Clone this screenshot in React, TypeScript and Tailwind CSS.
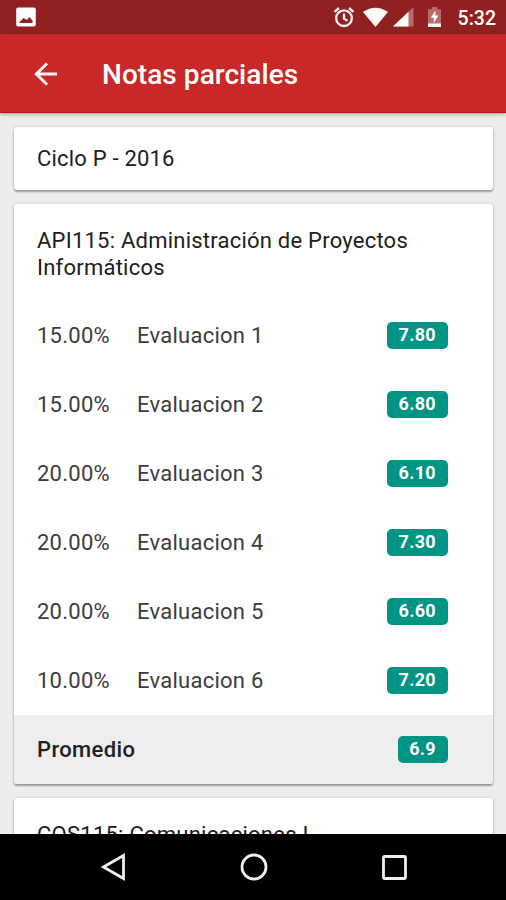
import React from 'react';

const evaluations = [
  { weight: '15.00%', name: 'Evaluacion 1', grade: '7.80' },
  { weight: '15.00%', name: 'Evaluacion 2', grade: '6.80' },
  { weight: '20.00%', name: 'Evaluacion 3', grade: '6.10' },
  { weight: '20.00%', name: 'Evaluacion 4', grade: '7.30' },
  { weight: '20.00%', name: 'Evaluacion 5', grade: '6.60' },
  { weight: '10.00%', name: 'Evaluacion 6', grade: '7.20' },
];

const cardShadow = 'shadow-[0_2px_2px_rgba(0,0,0,0.32),0_0_3px_rgba(0,0,0,0.18)]';

function StatusBar() {
  return (
    <div className="flex h-[34px] shrink-0 items-center bg-[#912121] text-white">
      <svg className="ml-4 h-5 w-5" viewBox="0 0 20 20">
        <path fill="currentColor" fillRule="evenodd" d="M2.200 .5h15.600a2 2 0 0 1 2 2v15a2 2 0 0 1-2 2H2.200a2 2 0 0 1-2-2v-15a2 2 0 0 1 2-2ZM3.500 16h13v-2.500l-3.300-3.500-2.200 3-3.500-2-4 4.200Z" />
      </svg>
      <div className="grow" />
      <svg className="h-[22px] w-[22px]" viewBox="0 0 22 22" fill="none" stroke="#fff0ee" strokeWidth="2.300">
        <circle cx="11" cy="12.200" r="7.800" />
        <path d="M11 7.500v5.200l3.500 2M1.500 5.800l4.500-3.800M20.500 5.800l-4.500-3.800" />
      </svg>
      <svg className="ml-[7px] h-5 w-[27px]" viewBox="0 0 27 20" fill="#fffaf6">
        <path d="M1 5Q13.500-3.500 26 5L13.500 20Z" />
      </svg>
      <svg className="ml-[4px] h-5 w-[21px]" viewBox="0 0 21 20" fill="#fffaf6">
        <path d="M0 19.500L20.500 0v19.500Z" opacity=".35" />
        <path d="M0 19.500L15.500 4.800v14.700Z" />
      </svg>
      <svg className="ml-[14px] h-[22px] w-[13px]" viewBox="0 0 14 22" preserveAspectRatio="none">
        <path d="M0 3.200h4V1h6v2.200h4V21H0Z" fill="#b76c6c" />
        <path d="M0 17.500h14V21H0Z" fill="#fffaf6" />
        <path d="M8 4.500l-5 7.300h3.200V17l5-7.500H8Z" fill="#fffaf6" />
      </svg>
      <span className="mt-[3px] mr-[10px] ml-[17px] text-[19.500px] leading-[34px] font-medium">5:32</span>
    </div>
  );
}

function Badge({ children }: { children: React.ReactNode }) {
  return (
    <span className="ml-auto h-[27px] rounded-[5px] bg-[#009485] px-[11.500px] text-[18px] leading-[25px] font-bold tracking-[0.300px] text-white">
      {children}
    </span>
  );
}

export default function App() {
  return (
    <div className="flex h-[900px] w-[506px] flex-col overflow-hidden bg-[#ededed] font-['Roboto',sans-serif] text-[#202020]">
      <StatusBar />
      <header className="z-10 flex h-[79px] shrink-0 items-center border-b border-[#b51515] bg-[#c82827] text-white shadow-[0_1px_4px_rgba(0,0,0,0.35)]">
        <svg className="mt-px ml-[34px] h-6 w-6" viewBox="0 0 24 24" fill="none" stroke="#fff3ef" strokeWidth="3">
          <path d="M23 12H3M13 1.500L2.300 12 13 22.500" />
        </svg>
        <h1 className="mt-[3px] ml-[44px] text-[28px] leading-8 font-medium tracking-[0.050px]">Notas parciales</h1>
      </header>

      <main className="flex h-[721px] shrink-0 flex-col gap-[14px] overflow-hidden px-[14px] pt-[14px] text-[22px]">
        <section className={`h-[63px] w-[479px] shrink-0 rounded-[3px] bg-white px-[23px] leading-[63px] tracking-[0.200px] ${cardShadow}`}>
          Ciclo P - 2016
        </section>

        <section className={`w-[479px] shrink-0 overflow-hidden rounded-[3px] bg-white ${cardShadow}`}>
          <h2 className="h-[97px] px-[23px] pt-[23px] leading-[27px] tracking-[0.230px]">
            API115: Administración de Proyectos
            <br />
            Informáticos
          </h2>
          {evaluations.map((item) => (
            <div key={item.name} className="flex h-[69px] items-center pr-[45.500px] pl-[23px] tracking-[0.250px] text-[#3c3c3c]">
              <span className="w-[100px]">{item.weight}</span>
              <span>{item.name}</span>
              <Badge>{item.grade}</Badge>
            </div>
          ))}
          <div className="flex h-[69px] items-center bg-[#eeeeee] pr-[45.500px] pl-[23px] font-medium">
            <span className="tracking-[0.350px]">Promedio</span>
            <Badge>6.9</Badge>
          </div>
        </section>

        <section className={`h-24 w-[479px] shrink-0 rounded-[3px] bg-white px-[23px] pt-[23px] leading-[27px] tracking-[0.250px] ${cardShadow}`}>
          COS115: Comunicaciones I
        </section>
      </main>

      <nav className="flex h-[66px] shrink-0 items-center bg-black pl-[100px]">
        <svg className="h-7 w-[26px]" viewBox="0 0 26 28" fill="none" stroke="#eee" strokeWidth="2.800">
          <path d="M3.500 14L23.500 2.500v23Z" />
        </svg>
        <svg className="ml-[114px] h-7 w-7" viewBox="0 0 28 28" fill="none" stroke="#eee" strokeWidth="2.800">
          <circle cx="14" cy="14" r="12" />
        </svg>
        <svg className="ml-[114px] h-[25px] w-[25px]" viewBox="0 0 25 25" fill="none" stroke="#eee" strokeWidth="2.800">
          <rect x="1.500" y="1.500" width="22" height="22" rx="1" />
        </svg>
      </nav>
    </div>
  );
}
